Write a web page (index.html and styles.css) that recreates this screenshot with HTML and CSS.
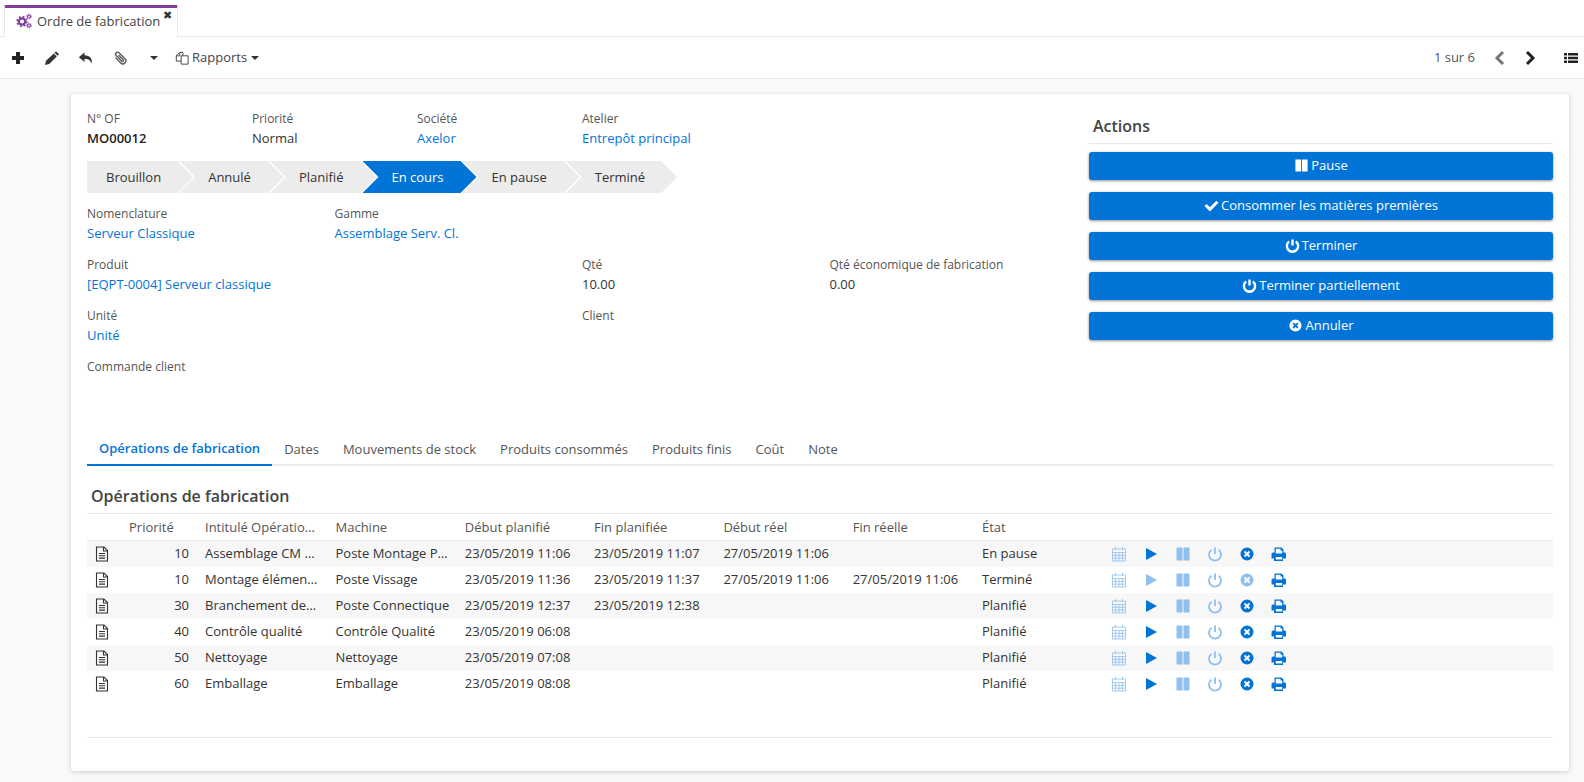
FILE: index.html
```html
<!DOCTYPE html>
<html>
	<head>
		<meta charset="UTF-8">
		<title>Ordre de fabrication</title>
		<link rel="stylesheet" href="styles.css">
	</head>
	<body>
		<svg class="sprite" xmlns="http://www.w3.org/2000/svg">
			<symbol id="i-cogs" viewBox="0 0 16 16">
				<circle cx="6" cy="8.5" r="3.2" fill="none" stroke="currentColor" stroke-width="2.2"/>
				<circle cx="6" cy="8.5" r="4.9" fill="none" stroke="currentColor" stroke-width="1.6" stroke-dasharray="1.9 1.95"/>
				<circle cx="13" cy="3.5" r="1.5" fill="none" stroke="currentColor" stroke-width="1.2"/>
				<circle cx="13" cy="3.5" r="2.5" fill="none" stroke="currentColor" stroke-width="1" stroke-dasharray="1 1.6"/>
				<circle cx="13" cy="12.5" r="1.5" fill="none" stroke="currentColor" stroke-width="1.2"/>
				<circle cx="13" cy="12.5" r="2.5" fill="none" stroke="currentColor" stroke-width="1" stroke-dasharray="1 1.6"/>
			</symbol>
			<symbol id="i-plus" viewBox="0 0 16 16"><path d="M6 2h4v4h4v4h-4v4H6v-4H2V6h4z"/></symbol>
			<symbol id="i-pencil" viewBox="0 0 16 16"><path d="M12 1.200l3 3-1.500 1.500-3-3zM9.800 3.400l3 3-7.600 7.600-4.200 1 1-4.200z"/></symbol>
			<symbol id="i-reply" viewBox="0 0 16 16"><path d="M6.500 2.500L.8 7.300l5.700 4.800V9c3.600-.2 5.800 .7 7 4.600 1.400-4.600-1.400-8.200-7-8.400z"/></symbol>
			<symbol id="i-clip" viewBox="0 0 16 16"><path d="M5 4.500v7.500a3 3 0 0 0 6 0V3.500a2 2 0 0 0-4 0v8a1 1 0 0 0 2 0V5" transform="rotate(-45 8 8)" fill="none" stroke="currentColor" stroke-width="1.300"/></symbol>
			<symbol id="i-files" viewBox="0 0 16 16"><path d="M9 5.500V1.500H5.500L1.500 5.500V11.500H7M5.500 1.500V5.500H1.500M7 11.500V5.500H15V15H7V11.500" fill="none" stroke="currentColor" stroke-width="1.100"/></symbol>
			<symbol id="i-left" viewBox="0 0 16 16"><path d="M11 2L5 8l6 6" fill="none" stroke="currentColor" stroke-width="3"/></symbol>
			<symbol id="i-right" viewBox="0 0 16 16"><path d="M5 2l6 6-6 6" fill="none" stroke="currentColor" stroke-width="3"/></symbol>
			<symbol id="i-list" viewBox="0 0 16 16"><path d="M1 3h3v2.500H1zM5 3h10v2.500H5zM1 6.700h3v2.500H1zM5 6.700h10v2.500H5zM1 10.400h3v2.500H1zM5 10.400h10v2.500H5z"/></symbol>
			<symbol id="i-doc" viewBox="0 0 16 16"><path d="M2.500 1h7.500l3.500 3.500V15h-11zM9.500 1.500V5h3.500M5 7.500h6M5 9.800h6M5 12.100h6" fill="none" stroke="currentColor" stroke-width="1.100"/></symbol>
			<symbol id="i-cal" viewBox="0 0 16 16"><path d="M1.500 3h13v12h-13zM1.500 6.500h13M1.500 9.300h13M1.500 12.100h13M4.600 6.500V15M8 6.500V15M11.400 6.500V15M4.500 1v3M11.500 1v3" fill="none" stroke="currentColor" stroke-width="0.800"/></symbol>
			<symbol id="i-play" viewBox="0 0 16 16"><path d="M3 2l11 6-11 6z"/></symbol>
			<symbol id="i-pause" viewBox="0 0 16 16"><path d="M1.500 1.500h6v13h-6zM8.500 1.500h6v13h-6z"/></symbol>
			<symbol id="i-power" viewBox="0 0 16 16"><path d="M4.500 3.800a6 6 0 1 0 7 0M8 1.500v6.500" fill="none" stroke="currentColor"/></symbol>
			<symbol id="i-cancel" viewBox="0 0 16 16"><path fill-rule="evenodd" d="M8 1.500a6.500 6.500 0 1 0 0 13 6.500 6.500 0 0 0 0-13zM6.200 4.800L8 6.600l1.800-1.800 1.400 1.400L9.400 8l1.800 1.800-1.400 1.400L8 9.400l-1.800 1.800-1.400-1.400L6.600 8 4.800 6.200z"/></symbol>
			<symbol id="i-print" viewBox="0 0 16 16"><path fill-rule="evenodd" d="M3.500 1.500h7l2 2v3h1.500a1.500 1.500 0 0 1 1 1.500v4.500h-3v2.500h-9v-2.500H.5V8a1.500 1.500 0 0 1 1.500-1.500h1.500zM4.800 2.800v4.700h6.400V4.500H9.500V2.800zM4.800 11v2.500h6.400V11z"/></symbol>
			<symbol id="i-check" viewBox="0 0 16 16"><path d="M2.800 6.300L6.300 9.800l6.900-7 2.300 2.300-9.200 9.200L.5 8.600z"/></symbol>
		</svg>

		<div class="tabbar">
			<div class="viewtab">
				<svg class="ico cogs"><use href="#i-cogs"/></svg>
				<span>Ordre de fabrication</span>
				<span class="close">&#10006;</span>
			</div>
		</div>

		<div class="toolbar">
			<a class="tool"><svg class="ico dark"><use href="#i-plus"/></svg></a>
			<a class="tool"><svg class="ico"><use href="#i-pencil"/></svg></a>
			<a class="tool"><svg class="ico"><use href="#i-reply"/></svg></a>
			<a class="tool"><svg class="ico clip"><use href="#i-clip"/></svg></a>
			<a class="tool"><i class="caret"></i></a>
			<a class="reports"><svg class="ico"><use href="#i-files"/></svg><span>Rapports</span><i class="caret"></i></a>
			<div class="pager">
				<span>1 sur 6</span>
				<svg class="ico grey prev"><use href="#i-left"/></svg>
				<svg class="ico dark next"><use href="#i-right"/></svg>
				<svg class="ico dark list"><use href="#i-list"/></svg>
			</div>
		</div>

		<div class="main">
			<div class="card">
				<div class="top">
					<div class="left">
						<div class="fields">
							<div class="f2"><label>N° OF</label><p class="strong">MO00012</p></div>
							<div class="f2"><label>Priorité</label><p>Normal</p></div>
							<div class="f2"><label>Société</label><p><a>Axelor</a></p></div>
							<div class="f2"><label>Atelier</label><p><a>Entrepôt principal</a></p></div>
						</div>
						<ul class="steps">
							<li>Brouillon</li>
							<li>Annulé</li>
							<li>Planifié</li>
							<li class="on">En cours</li>
							<li>En pause</li>
							<li>Terminé</li>
						</ul>
						<div class="fields">
							<div class="f3"><label>Nomenclature</label><p><a>Serveur Classique</a></p></div>
							<div class="f9"><label>Gamme</label><p><a>Assemblage Serv. Cl.</a></p></div>
							<div class="f6"><label>Produit</label><p><a>[EQPT-0004] Serveur classique</a></p></div>
							<div class="f3"><label>Qté</label><p>10.00</p></div>
							<div class="f3"><label>Qté économique de fabrication</label><p>0.00</p></div>
							<div class="f6"><label>Unité</label><p><a>Unité</a></p></div>
							<div class="f6"><label>Client</label><p></p></div>
							<div class="f12"><label>Commande client</label><p></p></div>
						</div>
					</div>
					<div class="actions">
						<h4>Actions</h4>
						<button><svg class="ico"><use href="#i-pause"/></svg><span>Pause</span></button>
						<button><svg class="ico"><use href="#i-check"/></svg><span>Consommer les matières premières</span></button>
						<button><svg class="ico"><use href="#i-power"/></svg><span>Terminer</span></button>
						<button><svg class="ico"><use href="#i-power"/></svg><span>Terminer partiellement</span></button>
						<button><svg class="ico"><use href="#i-cancel"/></svg><span>Annuler</span></button>
					</div>
				</div>

				<ul class="tabs">
					<li class="active">Opérations de fabrication</li>
					<li>Dates</li>
					<li>Mouvements de stock</li>
					<li>Produits consommés</li>
					<li>Produits finis</li>
					<li>Coût</li>
					<li>Note</li>
				</ul>

				<h4 class="section">Opérations de fabrication</h4>
				<table class="grid">
					<colgroup>
						<col class="c-doc"><col class="c-prio"><col class="c-name"><col class="c-w"><col class="c-w"><col class="c-w"><col class="c-w"><col class="c-w"><col class="c-w"><col>
					</colgroup>
					<thead>
						<tr><th></th><th>Priorité</th><th>Intitulé Opératio…</th><th>Machine</th><th>Début planifié</th><th>Fin planifiée</th><th>Début réel</th><th>Fin réelle</th><th>État</th><th></th></tr>
					</thead>
					<tbody>
						<tr>
							<td class="doc"><svg class="ico"><use href="#i-doc"/></svg></td><td class="num">10</td><td>Assemblage CM …</td><td>Poste Montage P…</td><td>23/05/2019 11:06</td><td>23/05/2019 11:07</td><td>27/05/2019 11:06</td><td></td><td>En pause</td>
							<td class="btns"><svg class="ico pale"><use href="#i-cal"/></svg><svg class="ico"><use href="#i-play"/></svg><svg class="ico pale"><use href="#i-pause"/></svg><svg class="ico pale"><use href="#i-power"/></svg><svg class="ico"><use href="#i-cancel"/></svg><svg class="ico"><use href="#i-print"/></svg></td>
						</tr>
						<tr>
							<td class="doc"><svg class="ico"><use href="#i-doc"/></svg></td><td class="num">10</td><td>Montage élémen…</td><td>Poste Vissage</td><td>23/05/2019 11:36</td><td>23/05/2019 11:37</td><td>27/05/2019 11:06</td><td>27/05/2019 11:06</td><td>Terminé</td>
							<td class="btns"><svg class="ico pale"><use href="#i-cal"/></svg><svg class="ico pale"><use href="#i-play"/></svg><svg class="ico pale"><use href="#i-pause"/></svg><svg class="ico pale"><use href="#i-power"/></svg><svg class="ico pale"><use href="#i-cancel"/></svg><svg class="ico"><use href="#i-print"/></svg></td>
						</tr>
						<tr>
							<td class="doc"><svg class="ico"><use href="#i-doc"/></svg></td><td class="num">30</td><td>Branchement de…</td><td>Poste Connectique</td><td>23/05/2019 12:37</td><td>23/05/2019 12:38</td><td></td><td></td><td>Planifié</td>
							<td class="btns"><svg class="ico pale"><use href="#i-cal"/></svg><svg class="ico"><use href="#i-play"/></svg><svg class="ico pale"><use href="#i-pause"/></svg><svg class="ico pale"><use href="#i-power"/></svg><svg class="ico"><use href="#i-cancel"/></svg><svg class="ico"><use href="#i-print"/></svg></td>
						</tr>
						<tr>
							<td class="doc"><svg class="ico"><use href="#i-doc"/></svg></td><td class="num">40</td><td>Contrôle qualité</td><td>Contrôle Qualité</td><td>23/05/2019 06:08</td><td></td><td></td><td></td><td>Planifié</td>
							<td class="btns"><svg class="ico pale"><use href="#i-cal"/></svg><svg class="ico"><use href="#i-play"/></svg><svg class="ico pale"><use href="#i-pause"/></svg><svg class="ico pale"><use href="#i-power"/></svg><svg class="ico"><use href="#i-cancel"/></svg><svg class="ico"><use href="#i-print"/></svg></td>
						</tr>
						<tr>
							<td class="doc"><svg class="ico"><use href="#i-doc"/></svg></td><td class="num">50</td><td>Nettoyage</td><td>Nettoyage</td><td>23/05/2019 07:08</td><td></td><td></td><td></td><td>Planifié</td>
							<td class="btns"><svg class="ico pale"><use href="#i-cal"/></svg><svg class="ico"><use href="#i-play"/></svg><svg class="ico pale"><use href="#i-pause"/></svg><svg class="ico pale"><use href="#i-power"/></svg><svg class="ico"><use href="#i-cancel"/></svg><svg class="ico"><use href="#i-print"/></svg></td>
						</tr>
						<tr>
							<td class="doc"><svg class="ico"><use href="#i-doc"/></svg></td><td class="num">60</td><td>Emballage</td><td>Emballage</td><td>23/05/2019 08:08</td><td></td><td></td><td></td><td>Planifié</td>
							<td class="btns"><svg class="ico pale"><use href="#i-cal"/></svg><svg class="ico"><use href="#i-play"/></svg><svg class="ico pale"><use href="#i-pause"/></svg><svg class="ico pale"><use href="#i-power"/></svg><svg class="ico"><use href="#i-cancel"/></svg><svg class="ico"><use href="#i-print"/></svg></td>
						</tr>
					</tbody>
				</table>
				<div class="gridfoot"></div>
			</div>
		</div>
	</body>
</html>
```

FILE: styles.css
```css
*{
	padding: 0;
	margin: 0;
	box-sizing: border-box;
}
html,body{
	height: 782px;
	overflow: hidden;
}
body{
	font: 13px/20px "Open Sans", "Liberation Sans", sans-serif;
	color: #333;
	background: #f9f9f9;
}
ul{
	list-style: none;
}
a{
	color: #0274d8;
}
.sprite{
	display: none;
}
.ico{
	width: 16px;
	height: 16px;
	fill: currentColor;
	stroke-width: 1.8;
	flex: none;
}

/* top tab */
.tabbar{
	height: 37px;
	padding-top: 5px;
	padding-left: 4px;
	background: #fff;
	border-bottom: 1px solid #e8e8e8;
}
.viewtab{
	position: relative;
	display: flex;
	align-items: center;
	width: 174px;
	height: 32px;
	padding-left: 11px;
	padding-bottom: 3px;
	gap: 5px;
	background: #fff;
	border: 1px solid #e8e8e8;
	border-top: 3px solid #7d3c98;
	border-bottom: 0;
	border-radius: 2px 2px 0 0;
	color: #444;
}
.viewtab .cogs{
	color: #7d3c98;
}
.viewtab .close{
	position: absolute;
	right: 5px;
	top: 0;
	font-size: 11px;
	line-height: 14px;
	color: #333;
}

/* toolbar */
.toolbar{
	display: flex;
	align-items: center;
	height: 42px;
	padding-left: 1px;
	padding-right: 5px;
	background: #fff;
	border-bottom: 1px solid #e8e8e8;
}
.tool{
	display: flex;
	align-items: center;
	justify-content: center;
	width: 34px;
	height: 32px;
	color: #333;
}
.dark{
	color: #222;
}
.grey{
	color: #777;
}
.clip{
	color: #555;
}
.caret{
	display: inline-block;
	width: 0;
	height: 0;
	border-top: 4px solid #333;
	border-left: 4px solid transparent;
	border-right: 4px solid transparent;
}
.reports{
	display: flex;
	align-items: center;
	margin-left: 4px;
	color: #444;
	gap: 3px;
}
.reports .ico{
	width: 14px;
	height: 14px;
}
.reports span{
	margin-top: -2px;
}
.reports .caret{
	margin-left: 1px;
}
.pager{
	display: flex;
	align-items: center;
	margin-left: auto;
	color: #555;
}
.pager .prev{
	margin-left: 17px;
}
.pager .next{
	margin-left: 14px;
}
.pager .list{
	margin-left: 25px;
}
.pager span{
	margin-top: -1px;
	margin-left: 2px;
}

/* card */
.main{
	padding: 15px 15px 0 71px;
}
.card{
	height: 677px;
	padding: 15px 16px 0;
	background: #fff;
	border-radius: 3px;
	box-shadow: 0 1px 5px rgba(0,0,0,.18);
}
.top{
	display: flex;
	height: 324px;
}
.left{
	width: 990px;
}
.fields{
	display: grid;
	grid-template-columns: repeat(12, 82.5px);
	row-gap: 11px;
}
.f2{grid-column: span 2;}
.f3{grid-column: span 3;}
.f6{grid-column: span 6;}
.f9{grid-column: span 9;}
.f12{grid-column: span 12;}
.fields label{
	display: block;
	height: 20px;
	color: #555;
	font-size: 12px;
}
.fields p{
	height: 20px;
	margin-top: -1px;
	margin-bottom: 1px;
	color: #333;
}
.fields p.strong{
	font-weight: 600;
	color: #222;
}

/* status steps */
.steps{
	display: flex;
	margin: 12px 0 11px;
}
.steps li{
	height: 32px;
	line-height: 32px;
	padding: 0 33px 0 29px;
	margin-right: -14px;
	background: #ececec;
	clip-path: polygon(0 0, calc(100% - 16px) 0, 100% 50%, calc(100% - 16px) 100%, 0 100%, 16px 50%);
}
.steps li:first-child{
	padding-left: 19px;
	padding-right: 32px;
	clip-path: polygon(0 0, calc(100% - 16px) 0, 100% 50%, calc(100% - 16px) 100%, 0 100%);
}
.steps li:last-child{
	padding-right: 32px;
}
.steps li.on{
	background: #0274d8;
	color: #fff;
}

/* actions */
.actions{
	width: 464px;
	margin-left: 12px;
}
.actions h4{
	font-size: 16px;
	font-weight: 600;
	height: 35px;
	line-height: 34px;
	padding-left: 4px;
	margin-bottom: 8px;
	border-bottom: 1px solid #e8e8e8;
	color: #444;
}
.actions button{
	display: flex;
	align-items: center;
	justify-content: center;
	gap: 2px;
	width: 100%;
	height: 28px;
	margin-bottom: 12px;
	font: inherit;
	color: #fff;
	background: #0274d8;
	border: 0;
	border-radius: 3px;
	box-shadow: 0 1px 3px rgba(0,0,0,.45);
}
.actions button span{
	margin-top: -2px;
}
.actions button .ico{
	width: 15px;
	height: 15px;
	stroke-width: 2.5;
	margin-top: -2px;
}

/* tabs */
.tabs{
	display: flex;
	height: 33px;
	border-bottom: 2px solid #ececec;
	color: #555;
}
.tabs li{
	height: 33px;
	padding: 6px 12px 0;
}
.tabs li.active{
	padding-top: 5px;
	color: #0274d8;
	font-weight: 600;
	border-bottom: 2px solid #0274d8;
}
.section{
	height: 47px;
	padding: 20px 0 0 4px;
	font-size: 16px;
	font-weight: 600;
	color: #444;
	line-height: 20px;
}

/* table */
.grid{
	width: 100%;
	table-layout: fixed;
	border-collapse: collapse;
}
.c-doc{width: 34px;}
.c-prio{width: 76px;}
.c-name{width: 130.5px;}
.c-w{width: 129.3px;}
.grid th{
	height: 27px;
	padding: 0 8px;
	text-align: left;
	font-weight: 400;
	color: #555;
	border-top: 1px solid #e8e8e8;
	border-bottom: 1px solid #e8e8e8;
	white-space: nowrap;
	overflow: hidden;
}
.grid td{
	height: 26px;
	padding: 0 8px 2px;
	white-space: nowrap;
	overflow: hidden;
}
.grid tbody tr:nth-child(odd){
	background: #f7f7f7;
}
.grid td.num{
	text-align: right;
}
.grid td.doc{
	padding-left: 7px;
	color: #333;
}
.grid td .ico{
	vertical-align: middle;
}
.grid td.btns{
	padding-left: 8px;
	color: #0274d8;
}
.btns .ico{
	margin-right: 16px;
}
.btns .pale{
	color: #8fc0ee;
}
.gridfoot{
	height: 41px;
	border-bottom: 1px solid #e8e8e8;
}
```
